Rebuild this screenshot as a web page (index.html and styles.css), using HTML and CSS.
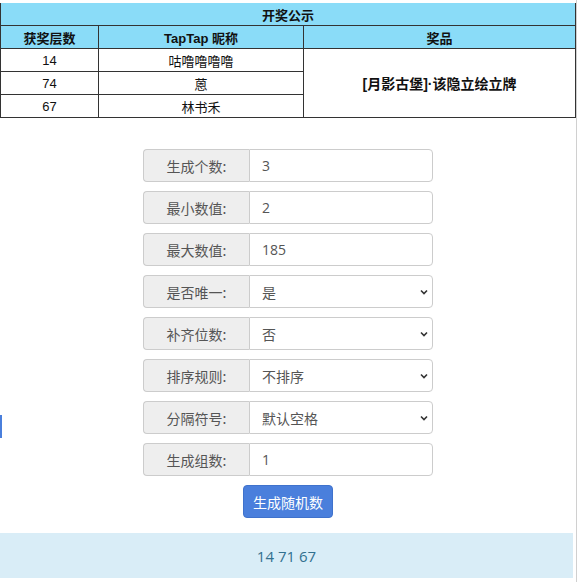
FILE: index.html
```html
<!DOCTYPE html>
<html lang="zh">
<head>
<meta charset="utf-8">
<title>开奖公示</title>
<link rel="stylesheet" href="styles.css">
</head>
<body>
<div class="page">
  <table class="prize">
    <colgroup><col class="c1"><col class="c2"><col class="c3"></colgroup>
    <tr><th colspan="3" class="title">开奖公示</th></tr>
    <tr><th>获奖层数</th><th>TapTap 昵称</th><th>奖品</th></tr>
    <tr><td>14</td><td>咕噜噜噜噜</td><td rowspan="3" class="award">[月影古堡]·该隐立绘立牌</td></tr>
    <tr><td>74</td><td>蒽</td></tr>
    <tr><td>67</td><td>林书禾</td></tr>
  </table>

  <div class="form">
    <div class="row"><span class="label">生成个数:</span><input class="field" value="3"></div>
    <div class="row"><span class="label">最小数值:</span><input class="field" value="2"></div>
    <div class="row"><span class="label">最大数值:</span><input class="field" value="185"></div>
    <div class="row"><span class="label">是否唯一:</span><div class="field select">是<span class="chev"><svg width="8" height="6" viewBox="0 0 8 6"><path d="M1 1.5 L4 4.5 L7 1.5" fill="none" stroke="#333" stroke-width="1.6"/></svg></span></div></div>
    <div class="row"><span class="label">补齐位数:</span><div class="field select">否<span class="chev"><svg width="8" height="6" viewBox="0 0 8 6"><path d="M1 1.5 L4 4.5 L7 1.5" fill="none" stroke="#333" stroke-width="1.6"/></svg></span></div></div>
    <div class="row"><span class="label">排序规则:</span><div class="field select">不排序<span class="chev"><svg width="8" height="6" viewBox="0 0 8 6"><path d="M1 1.5 L4 4.5 L7 1.5" fill="none" stroke="#333" stroke-width="1.6"/></svg></span></div></div>
    <div class="row"><span class="label">分隔符号:</span><div class="field select">默认空格<span class="chev"><svg width="8" height="6" viewBox="0 0 8 6"><path d="M1 1.5 L4 4.5 L7 1.5" fill="none" stroke="#333" stroke-width="1.6"/></svg></span></div></div>
    <div class="row"><span class="label">生成组数:</span><input class="field" value="1"></div>
    <button class="btn">生成随机数</button>
  </div>

  <div class="result">14 71 67</div>
</div>
<div class="edge-mark"></div>
</body>
</html>
```

FILE: styles.css
```css
html, body {
  margin: 0;
  padding: 0;
  background: #fff;
}
body {
  font-family: "Liberation Sans", "Noto Sans CJK SC", sans-serif;
  width: 578px;
  height: 582px;
  overflow: hidden;
  position: relative;
}
.page {
  width: 576px;
  padding-top: 3px;
  border-right: 1px solid #d0d0d0;
  min-height: 579px;
}
.prize {
  width: 576px;
  border-collapse: collapse;
  font-size: 13px;
  color: #111;
  table-layout: fixed;
}
.prize .c1 { width: 98px; }
.prize .c2 { width: 205px; }
.prize th, .prize td {
  border: 1px solid #333;
  text-align: center;
  padding: 0;
  height: 22px;
  font-weight: normal;
  font-family: "Liberation Sans", "Noto Sans CJK SC", sans-serif;
}
.prize th {
  background: #8adcf8;
  font-weight: bold;
  height: 22px;
}
.prize td {
  height: 22px;
}
.prize .title {
  border-top: none;
  height: 22px;
}
.award {
  font-weight: bold !important;
  font-size: 14px;
}
.form {
  width: 290px;
  margin: 31px auto 0;
  display: flex;
  flex-direction: column;
  gap: 9px;
  align-items: center;
}
.row {
  display: flex;
  width: 290px;
  height: 33px;
}
.label {
  box-sizing: border-box;
  flex: none;
  width: 106px;
  height: 33px;
  background: #eee;
  border: 1px solid #ccc;
  border-right: none;
  border-radius: 4px 0 0 4px;
  color: #555;
  font-size: 14px;
  font-family: "Noto Sans CJK SC", sans-serif;
  display: flex;
  align-items: center;
  justify-content: center;
}
.field {
  box-sizing: border-box;
  flex: 1;
  min-width: 0;
  width: 0;
  height: 33px;
  border: 1px solid #ccc;
  border-radius: 0 4px 4px 0;
  padding: 0 12px;
  color: #555;
  font-size: 14px;
  font-family: "Open Sans", "Noto Sans CJK SC", sans-serif;
  background: #fff;
  outline: none;
  margin: 0;
}
.select {
  display: flex;
  align-items: center;
  justify-content: space-between;
  font-family: "Noto Sans CJK SC", sans-serif;
  padding-right: 4px;
}
.chev {
  display: flex;
  align-items: center;
}
.btn {
  width: 90px;
  height: 33px;
  background: #4a7fdc;
  border: 1px solid #3f72cc;
  border-radius: 4px;
  color: #fff;
  font-size: 14px;
  font-family: "Noto Sans CJK SC", sans-serif;
  padding: 0;
}
.result {
  margin-top: 15px;
  width: 573px;
  height: 45px;
  background: #d9edf7;
  color: #31708f;
  font-size: 15px;
  font-family: "Open Sans", sans-serif;
  display: flex;
  align-items: center;
  justify-content: center;
}
.edge-mark {
  position: absolute;
  left: 0;
  top: 415px;
  width: 2px;
  height: 23px;
  background: #4a7fdc;
}
```
